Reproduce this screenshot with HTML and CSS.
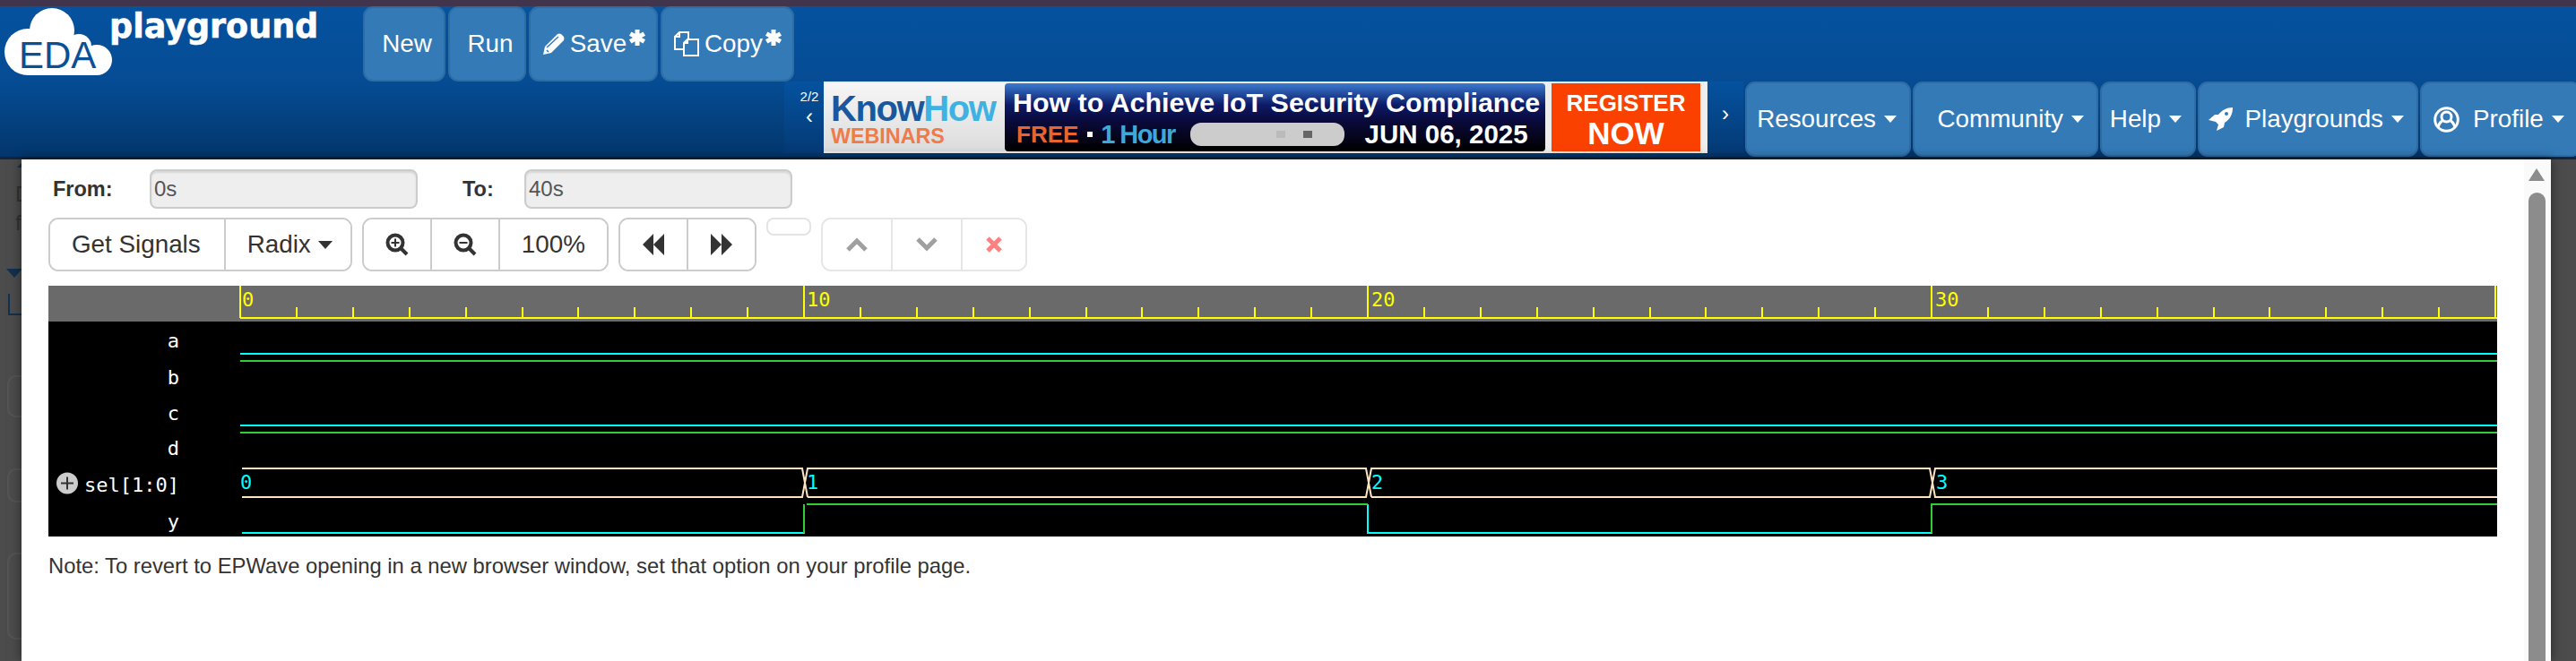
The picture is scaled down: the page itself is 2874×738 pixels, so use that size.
FILE: index.html
```html
<!DOCTYPE html>
<html lang="en">
<head>
  <meta charset="UTF-8">
  <title>EDA Playground</title>
  <link rel="stylesheet" href="styles.css">
</head>
<body>

  <div class="topline"></div>

  <header class="header">
    <div class="row-top">
      <svg class="logo" width="400" height="84" viewBox="0 0 400 84">
        <g class="logo-cloud">
          <circle cx="31" cy="51" r="26"/>
          <circle cx="58" cy="27" r="25"/>
          <circle cx="88" cy="45" r="14"/>
          <circle cx="108" cy="60" r="17"/>
          <rect x="31" y="45" width="77" height="32"/>
        </g>
        <text class="logo-eda" x="21" y="69">EDA</text>
        <text class="logo-name" x="122" y="35">playground</text>
      </svg>

      <button class="nav-btn w-new">New</button>
      <button class="nav-btn w-run">Run</button>
      <button class="nav-btn w-save">
        <svg width="25" height="24" viewBox="0 0 25 24"><path class="ico-fill" d="M1 24L3 15L17 1Q19 0 21 1L24 4Q25 6 24 8L10 22Z"/><path class="ico-cut" d="M5 16L18 4M5 19L7 21"/></svg>
        <span>Save</span>
        <svg class="star" width="20" height="20" viewBox="0 0 18 18"><path d="M9 1V17M2 5L16 13M16 5L2 13"/></svg>
      </button>
      <button class="nav-btn w-copy">
        <svg width="28" height="28" viewBox="0 0 28 28"><path class="ico-doc" d="M6 1H16V20H1V6ZM6 1V6H1"/><path class="ico-doc" d="M15 9H27V27H11V13ZM15 9V13H11"/></svg>
        <span>Copy</span>
        <svg class="star" width="20" height="20" viewBox="0 0 18 18"><path d="M9 1V17M2 5L16 13M16 5L2 13"/></svg>
      </button>
    </div>

    <div class="row-bottom">
      <div class="ad-nav">
        <span class="ad-count">2/2</span>
        <span class="ad-arrow">‹</span>
      </div>

      <div class="ad">
        <div class="ad-brand">
          <div class="ad-know">Know<span class="ad-how">How</span></div>
          <div class="ad-web">WEBINARS</div>
        </div>
        <div class="ad-main">
          <div class="ad-title">How to Achieve IoT Security Compliance</div>
          <div class="ad-info">
            <span class="ad-free">FREE</span>
            <span class="ad-sep"></span>
            <span class="ad-hour">1 Hour</span>
            <span class="ad-pill"><i class="dot-light"></i><i class="dot-dark"></i></span>
            <span class="ad-date">JUN 06, 2025</span>
          </div>
        </div>
        <div class="ad-cta">
          <div class="ad-reg">REGISTER</div>
          <div class="ad-now">NOW</div>
        </div>
      </div>

      <div class="ad-nav ad-nav-next">
        <span class="ad-arrow">›</span>
      </div>

      <button class="nav-btn w-res">Resources<span class="caret"></span></button>
      <button class="nav-btn w-com">Community<span class="caret"></span></button>
      <button class="nav-btn w-help">Help<span class="caret"></span></button>
      <button class="nav-btn w-play">
        <svg class="ico-rocket" width="27" height="26" viewBox="0 0 27 26"><path class="ico-fill" fill-rule="evenodd" d="M27 0C27 8 24 13 18 17L17 22L9 26L11 19L8 16L0 14L7 8L11 8C15 3 20 0 27 0ZM20 5A2 2 0 1 0 20 9A2 2 0 1 0 20 5Z"/></svg>
        Playgrounds<span class="caret"></span>
      </button>
      <button class="nav-btn w-prof">
        <svg class="ico-user" width="29" height="29" viewBox="0 0 29 29"><circle cx="14.5" cy="14.5" r="12.8"/><circle cx="14.5" cy="11.5" r="5.5"/><path d="M5 23Q7 17 10 16M24 23Q22 17 19 16"/></svg>
        Profile<span class="caret"></span>
      </button>
    </div>
  </header>

  <div class="page">
    <div class="under">
      <div class="under-tip"></div>
      <div class="under-d">D</div>
      <div class="under-f">f</div>
      <div class="under-tri"></div>
      <div class="under-l"></div>
      <div class="under-box box-a">S</div>
      <div class="under-box box-b">l</div>
      <div class="under-box box-c">N<br>C<br>S</div>
    </div>

    <main class="modal">
      <div class="content">
        <div class="range">
          <label class="lbl-from">From:</label>
          <input class="time" type="text" value="0s" readonly>
          <label class="lbl-to">To:</label>
          <input class="time" type="text" value="40s" readonly>
        </div>

        <div class="toolbar">
          <div class="group">
            <button class="tool tool-get">Get Signals</button>
            <button class="tool tool-radix">Radix<span class="caret caret-dark"></span></button>
          </div>
          <div class="group">
            <button class="tool">
              <svg class="ico-zoom" width="26" height="26" viewBox="0 0 26 26"><circle cx="11" cy="11" r="8.5"/><path d="M17.5 17.5L24 24"/><path class="thin" d="M6.5 11H15.5M11 6.5V15.5"/></svg>
            </button>
            <button class="tool">
              <svg class="ico-zoom" width="26" height="26" viewBox="0 0 26 26"><circle cx="11" cy="11" r="8.5"/><path d="M17.5 17.5L24 24"/><path class="thin" d="M6.5 11H15.5"/></svg>
            </button>
            <button class="tool">100%</button>
          </div>
          <div class="group">
            <button class="tool"><svg width="26" height="26" viewBox="0 0 26 26"><path class="ico-dark" d="M13 1V25L1 13ZM25 1V25L13 13Z"/></svg></button>
            <button class="tool"><svg width="26" height="26" viewBox="0 0 26 26"><path class="ico-dark" d="M1 1V25L13 13ZM13 1V25L25 13Z"/></svg></button>
          </div>
          <div class="empty-btn"></div>
          <div class="group group-off">
            <button class="tool"><svg class="chev" width="26" height="16" viewBox="0 0 26 16"><path d="M3 14L13 4L23 14"/></svg></button>
            <button class="tool"><svg class="chev" width="26" height="16" viewBox="0 0 26 16"><path d="M3 2L13 12L23 2"/></svg></button>
            <button class="tool tool-x"><svg class="cross" width="20" height="20" viewBox="0 0 20 20"><path d="M3 3L17 17M17 3L3 17"/></svg></button>
          </div>
        </div>

        <svg class="wave" width="2732" height="280" viewBox="0 0 2732 280">
          <rect class="wave-bg" width="2732" height="280"/>
          <rect class="ruler-bg" width="2732" height="40"/>

          <path class="ruler" d="M214 36H2732M214 0V36M843 0V36M1472 0V36M2101 0V36M2730 0V36"/>
          <path class="ruler" d="M277 24V36M340 24V36M403 24V36M466 24V36M529 24V36M591 24V36M654 24V36M717 24V36M780 24V36M906 24V36M969 24V36M1032 24V36M1095 24V36M1158 24V36M1220 24V36M1283 24V36M1346 24V36M1409 24V36M1535 24V36M1598 24V36M1661 24V36M1724 24V36M1787 24V36M1849 24V36M1912 24V36M1975 24V36M2038 24V36M2164 24V36M2227 24V36M2290 24V36M2353 24V36M2416 24V36M2478 24V36M2541 24V36M2604 24V36M2667 24V36"/>
          <text class="ruler-num" x="216" y="23">0</text>
          <text class="ruler-num" x="846" y="23">10</text>
          <text class="ruler-num" x="1476" y="23">20</text>
          <text class="ruler-num" x="2105" y="23">30</text>

          <text class="sig" x="146" y="69">a</text>
          <text class="sig" x="146" y="110">b</text>
          <text class="sig" x="146" y="150">c</text>
          <text class="sig" x="146" y="189">d</text>
          <text class="sig" x="146" y="230">sel[1:0]</text>
          <text class="sig" x="146" y="271">y</text>

          <circle class="plus-bg" cx="21" cy="220.5" r="12"/>
          <path class="plus" d="M14 220.5H28M21 213.5V227.5"/>

          <path class="hi" d="M214 76H2732M214 156H2732"/>
          <path class="lo" d="M214 84H2732M214 164H2732"/>

          <path class="bus" d="M216 204H841L844 220L841 236H216"/>
          <path class="bus" d="M847 236L844 220L847 204H1470L1473 220L1470 236H847"/>
          <path class="bus" d="M1476 236L1473 220L1476 204H2099L2102 220L2099 236H1476"/>
          <path class="bus" d="M2732 204H2105L2102 220L2105 236H2732"/>
          <text class="bus-val" x="214" y="227">0</text>
          <text class="bus-val" x="846" y="227">1</text>
          <text class="bus-val" x="1476" y="227">2</text>
          <text class="bus-val" x="2106" y="227">3</text>

          <path class="hi" d="M216 276H844M1472 244V276H2102"/>
          <path class="lo" d="M843 276V244M846 244H1472M2101 276V244H2732"/>
        </svg>

        <p class="note">Note: To revert to EPWave opening in a new browser window, set that option on your profile page.</p>
      </div>

      <div class="scroll">
        <div class="scroll-up"></div>
        <div class="scroll-thumb"></div>
      </div>
    </main>
  </div>

</body>
</html>
```

FILE: styles.css
```css
* {
  box-sizing: border-box;
}
html, body {
  margin: 0;
  padding: 0;
  width: 2874px;
  height: 738px;
  overflow: hidden;
  background: #4c4c4c;
  font-family: "Liberation Sans", Arial, sans-serif;
}
.topline {
  height: 7px;
  background: #40354c;
}

/* header */
.header {
  height: 171px;
  overflow: hidden;
  background: linear-gradient(#05529f 0, #054c94 50%, #03366c 100%);
  border-bottom: 3px solid #14243a;
}
.row-top {
  display: flex;
  height: 84px;
  gap: 3px;
}
.logo {
  display: block;
  margin-right: 2px;
}
.logo-cloud {
  fill: #fff;
}
.logo-eda {
  font: 42px "Liberation Sans", sans-serif;
  fill: #0b5094;
}
.logo-name {
  font: bold 36.5px "DejaVu Sans", sans-serif;
  fill: #fff;
  stroke: #fff;
  stroke-width: 0.6;
}
.row-bottom {
  display: flex;
  height: 84px;
  padding-left: 875px;
  gap: 2px;
}
.nav-btn {
  display: flex;
  align-items: center;
  justify-content: flex-end;
  flex-shrink: 0;
  height: 84px;
  padding: 0 14px;
  background: #337ab7;
  border: 2px solid #2e6da4;
  border-radius: 11px;
  color: #fff;
  font: 27.8px "Liberation Sans", Arial, sans-serif;
}
.nav-btn svg {
  flex-shrink: 0;
}
.w-new { width: 92px; justify-content: center; padding: 0 0 0 6px; }
.w-run { width: 87px; justify-content: center; padding: 0 0 0 7px; }
.w-save { width: 144px; gap: 6px; justify-content: center; padding: 0 0 0 2px; }
.w-copy { width: 149px; gap: 6px; justify-content: center; padding: 0 0 0 2px; }
.w-res { width: 185px; }
.w-com { width: 207px; }
.w-help { width: 107px; }
.w-play { width: 246px; }
.w-prof { width: 180px; justify-content: flex-start; padding-left: 13px; }
.ico-fill { fill: #fff; }
.ico-cut { fill: none; stroke: #337ab7; stroke-width: 1.5; }
.ico-doc { fill: #337ab7; stroke: #fff; stroke-width: 2; }
.star {
  margin: -14px 0 0 -4px;
}
.star path {
  fill: none;
  stroke: #fff;
  stroke-width: 4.5;
}
.caret {
  display: inline-block;
  margin-left: 9px;
  border-top: 8px solid #fff;
  border-left: 7.5px solid transparent;
  border-right: 7.5px solid transparent;
}
.ico-rocket {
  margin-right: 13px;
}
.ico-user {
  margin-right: 15px;
}
.ico-user circle, .ico-user path {
  fill: none;
  stroke: #fff;
  stroke-width: 3;
}

/* banner */
.ad-nav {
  display: flex;
  flex-direction: column;
  align-items: center;
  flex-shrink: 0;
  width: 44px;
  height: 80px;
  padding: 8px 0 0 12px;
  color: #fff;
  background: linear-gradient(#05529f, #043a75);
}
.ad-nav-next {
  padding: 23px 0 0 0;
  margin-left: -2px;
  width: 40px;
}
.ad-count {
  font-size: 15px;
  line-height: 18px;
}
.ad-arrow {
  font-size: 24px;
  line-height: 26px;
}
.ad {
  display: flex;
  flex-shrink: 0;
  width: 986px;
  height: 80px;
  margin-left: -2px;
  padding: 2px 6px 2px 0;
  background: #eee;
  gap: 7px;
}
.ad-brand {
  width: 202px;
  padding: 7px 0 0 8px;
  flex-shrink: 0;
  background: linear-gradient(#f6f6f6, #dcdcdc);
  margin-right: -7px;
}
.ad-know {
  font: bold 40px/42px "Liberation Sans", sans-serif;
  letter-spacing: -1.4px;
  color: #19589f;
}
.ad-how {
  color: #3fb1e3;
}
.ad-web {
  margin-top: -3px;
  font: bold 23.3px/26px "Liberation Sans", sans-serif;
  color: #ee7b48;
}
.ad-main {
  width: 603px;
  padding: 3px 0 0 9px;
  border-radius: 4px;
  background: linear-gradient(#3a7ad0 0, #0c1a66 32%, #0a0a3c 55%, #000 100%);
  color: #fff;
}
.ad-title {
  font: bold 30.4px/36px "Liberation Sans", sans-serif;
  white-space: nowrap;
}
.ad-info {
  display: flex;
  align-items: center;
  height: 36px;
  padding-left: 4px;
  font: bold 29px/30px "Liberation Sans", sans-serif;
}
.ad-free { color: #e8642c; font-size: 26px; }
.ad-hour { color: #3ea8d8; letter-spacing: -1.6px; }
.ad-sep {
  width: 6px;
  height: 6px;
  margin: 0 9px 0 10px;
  background: #fff;
}
.ad-pill {
  display: flex;
  align-items: center;
  justify-content: center;
  gap: 20px;
  width: 172px;
  height: 26px;
  margin: 0 23px 0 17px;
  padding-left: 60px;
  border-radius: 12px;
  background: #ccc;
}
.dot-light, .dot-dark {
  width: 10px;
  height: 8px;
}
.dot-light { background: #bbb; }
.dot-dark { background: #666; }
.ad-date {
  font-size: 29.5px;
}
.ad-cta {
  width: 166px;
  padding-top: 6px;
  text-align: center;
  color: #fff;
  background: #fb4100;
}
.ad-reg {
  font: bold 26px/32px "Liberation Sans", sans-serif;
}
.ad-now {
  font: bold 35px/36px "Liberation Sans", sans-serif;
}

/* dimmed page under the modal */
.page {
  display: flex;
  height: 560px;
}
.under {
  width: 24px;
  flex-shrink: 0;
  overflow: hidden;
  color: #333;
  font-size: 24px;
}
.under-tip {
  width: 0;
  margin: 3px 0 0 19px;
  border-bottom: 6px solid #12304f;
  border-left: 6px solid transparent;
  border-right: 6px solid transparent;
}
.under-d {
  margin: 16px 0 0 17px;
  line-height: 28px;
}
.under-f {
  margin: 4px 0 0 17px;
  line-height: 28px;
}
.under-tri {
  width: 0;
  margin: 37px 0 0 7px;
  border-top: 10px solid #12304f;
  border-left: 9px solid transparent;
  border-right: 9px solid transparent;
}
.under-l {
  width: 30px;
  height: 24px;
  margin: 18px 0 0 9px;
  border-left: 2px solid #12304f;
  border-bottom: 2px solid #12304f;
}
.under-box {
  width: 40px;
  margin-left: 8px;
  padding-left: 14px;
  border: 2px solid #555;
  border-radius: 10px;
  line-height: 30px;
}
.box-a { height: 47px; margin-top: 67px; padding-top: 6px; }
.box-b { height: 38px; margin-top: 57px; padding-top: 2px; }
.box-c { height: 97px; margin-top: 56px; padding-top: 2px; }

/* modal */
.modal {
  display: flex;
  flex-shrink: 0;
  width: 2822px;
  height: 560px;
  background: #fff;
  box-shadow: 0 0 12px rgba(0, 0, 0, 0.5);
}
.content {
  width: 2792px;
  padding: 11px 0 0 30px;
}
.range {
  display: flex;
  align-items: center;
  height: 44px;
  color: #333;
  font-size: 23.5px;
  font-weight: bold;
}
.lbl-from {
  width: 113px;
  padding-left: 5px;
}
.lbl-to {
  width: 69px;
  margin-left: 50px;
}
.time {
  width: 299px;
  height: 44px;
  padding: 0 3px;
  border: 2px solid #ccc;
  border-radius: 8px;
  background: #eee;
  box-shadow: inset 0 2px 2px rgba(0, 0, 0, 0.1);
  color: #555;
  font: 24px "Liberation Sans", sans-serif;
}
.toolbar {
  display: flex;
  align-items: flex-start;
  height: 60px;
  margin-top: 10px;
  gap: 11px;
}
.group {
  display: flex;
  height: 60px;
  overflow: hidden;
  border: 2px solid #ccc;
  border-radius: 11px;
}
.tool {
  display: flex;
  align-items: center;
  padding: 0 24px;
  border: 0;
  border-left: 2px solid #ccc;
  background: #fff;
  color: #333;
  font: 27.8px "Liberation Sans", sans-serif;
}
.tool:first-child {
  border-left: 0;
}
.tool-get {
  padding-right: 26px;
}
.tool-radix {
  padding-right: 20px;
}
.caret-dark {
  margin-left: 8px;
  border-top: 9px solid #333;
  border-left-width: 8.5px;
  border-right-width: 8.5px;
}
.ico-zoom circle, .ico-zoom path {
  fill: none;
  stroke: #333;
  stroke-width: 4;
}
.ico-zoom .thin {
  stroke-width: 2;
}
.ico-dark { fill: #333; }
.empty-btn {
  width: 50px;
  height: 20px;
  border: 2px solid #e4e4e4;
  border-radius: 8px;
}
.group-off {
  border-color: #e6e6e6;
}
.group-off .tool {
  border-color: #e6e6e6;
  padding: 0 25px;
}
.group-off .tool-x {
  padding: 0 25px;
}
.chev path {
  fill: none;
  stroke: #a0a0a0;
  stroke-width: 5;
}
.cross path {
  fill: none;
  stroke: #ff8080;
  stroke-width: 5;
}

/* waveform */
.wave {
  display: block;
  margin-top: 16px;
}
.wave-bg { fill: #000; }
.ruler-bg { fill: #6a6a6a; }
.ruler {
  fill: none;
  stroke: #ffff00;
  stroke-width: 2;
}
.ruler-num {
  font: 22px "DejaVu Sans Mono", monospace;
  fill: #ffff00;
}
.sig {
  font: 22px "DejaVu Sans Mono", monospace;
  fill: #fff;
  text-anchor: end;
}
.plus-bg { fill: #ccc; }
.plus {
  stroke: #333;
  stroke-width: 2;
}
.hi, .lo, .bus {
  fill: none;
  stroke-width: 2;
}
.hi { stroke: #00ffff; }
.lo { stroke: #32cd32; }
.bus { stroke: #ffe4c4; }
.bus-val {
  font: 22px "DejaVu Sans Mono", monospace;
  fill: #00ffff;
}
.note {
  margin: 16px 0 0;
  color: #333;
  font-size: 23.8px;
  line-height: 34px;
}

/* scrollbar */
.scroll {
  width: 30px;
  padding: 10px 6px 0 5px;
  background: #fafafa;
}
.scroll-up {
  width: 0;
  border-bottom: 14px solid #8c8c8c;
  border-left: 9.5px solid transparent;
  border-right: 9.5px solid transparent;
}
.scroll-thumb {
  width: 19px;
  height: 530px;
  margin-top: 13px;
  border-radius: 10px 10px 0 0;
  background: #8c8c8c;
}
```
